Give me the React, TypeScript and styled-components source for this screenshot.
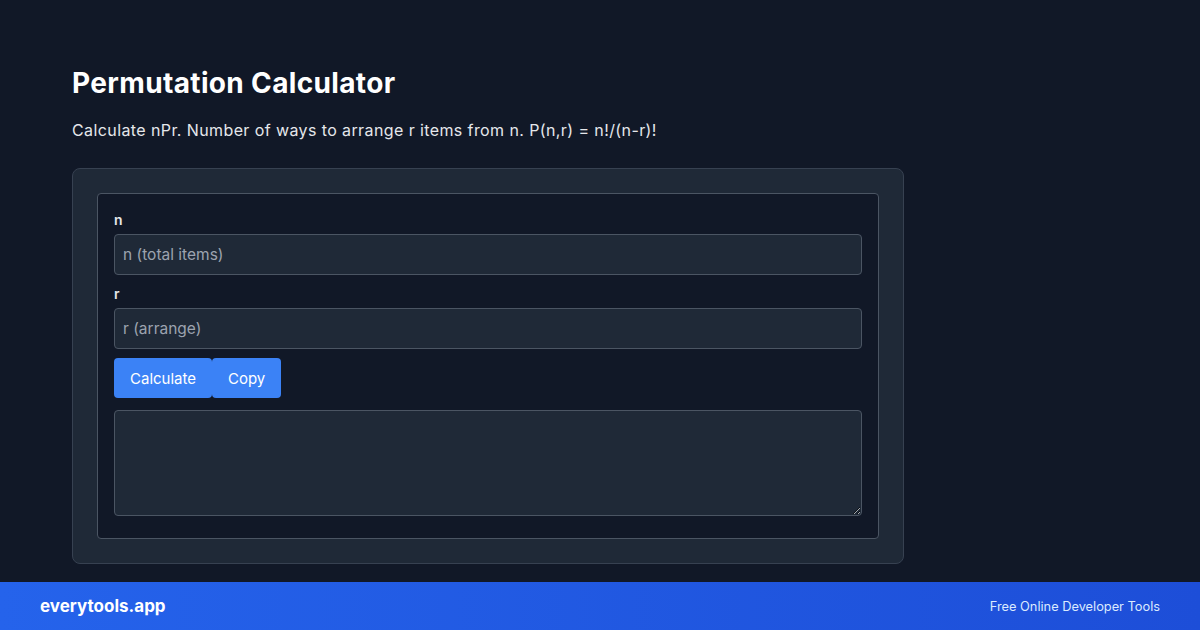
import React, { useState } from "react";
import styled, { createGlobalStyle } from "styled-components";

const GlobalStyle = createGlobalStyle`
  * { box-sizing: border-box; }
  body {
    margin: 0;
    background: #111827;
    font-family: Inter, "Noto Sans", sans-serif;
    color: #f9fafb;
  }
`;

const Page = styled.div`
  display: flex;
  flex-direction: column;
  height: 630px;
  width: 1200px;
  overflow: hidden;
`;

const Main = styled.main`
  padding: 64px 72px 0;
  flex: 1;
`;

const Title = styled.h1`
  margin: 0;
  font-size: 28px;
  line-height: 38px;
  font-weight: 700;
  letter-spacing: 0.35px;
  color: #ffffff;
`;

const Lead = styled.p`
  margin: 16px 0 0;
  font-size: 16px;
  line-height: 24px;
  letter-spacing: 0.4px;
  color: #e5e7eb;
`;

const Card = styled.section`
  margin-top: 26px;
  width: 832px;
  padding: 24px;
  background: #1f2937;
  border: 1px solid #374151;
  border-radius: 8px;
`;

const Tool = styled.div`
  padding: 16px;
  background: #111827;
  border: 1px solid #4b5563;
  border-radius: 4px;
`;

const Label = styled.label`
  display: block;
  font-size: 14px;
  line-height: 20px;
  font-weight: 600;
  color: #e5e7eb;
  margin-bottom: 4px;
`;

const Field = styled.input`
  display: block;
  width: 100%;
  height: 41px;
  padding: 0 8px;
  margin-bottom: 9px;
  font: inherit;
  font-size: 15.5px;
  color: #f9fafb;
  background: #1f2937;
  border: 1px solid #4b5563;
  border-radius: 4px;
  outline: none;
  &::placeholder { color: #9ca3af; }
`;

const Actions = styled.div`
  display: flex;
  margin: 9px 0 12px;
`;

const Button = styled.button`
  height: 40px;
  padding: 0 16px;
  font: inherit;
  font-size: 15px;
  color: #ffffff;
  background: #3b82f6;
  border: none;
  border-radius: 4px;
  cursor: pointer;
`;

const Output = styled.textarea`
  display: block;
  width: 100%;
  height: 106px;
  padding: 8px;
  margin-bottom: 6px;
  font: inherit;
  font-size: 16px;
  color: #f9fafb;
  background: #1f2937;
  border: 1px solid #4b5563;
  border-radius: 4px;
  outline: none;
  resize: vertical;
`;

const Footer = styled.footer`
  display: flex;
  align-items: center;
  justify-content: space-between;
  height: 48px;
  padding: 0 40px;
  background: linear-gradient(90deg, #2563eb, #1d4ed8);
`;

const Brand = styled.span`
  font-size: 17px;
  font-weight: 700;
  color: #ffffff;
`;

const Tagline = styled.span`
  font-size: 12.8px;
  color: #dbeafe;
`;

const factorial = (k: number): number => (k <= 1 ? 1 : k * factorial(k - 1));

export default function App() {
  const [n, setN] = useState("");
  const [r, setR] = useState("");
  const [out, setOut] = useState("");

  const calc = () => {
    const a = parseInt(n, 10);
    const b = parseInt(r, 10);
    if (isNaN(a) || isNaN(b) || b > a || a < 0 || b < 0) {
      setOut("Invalid input");
      return;
    }
    setOut(String(factorial(a) / factorial(a - b)));
  };

  return (
    <Page>
      <GlobalStyle />
      <Main>
        <Title>Permutation Calculator</Title>
        <Lead>Calculate nPr. Number of ways to arrange r items from n. P(n,r) = n!/(n-r)!</Lead>
        <Card>
          <Tool>
            <Label>n</Label>
            <Field placeholder="n (total items)" value={n} onChange={(e) => setN(e.target.value)} />
            <Label>r</Label>
            <Field placeholder="r (arrange)" value={r} onChange={(e) => setR(e.target.value)} />
            <Actions>
              <Button onClick={calc}>Calculate</Button>
              <Button onClick={() => navigator.clipboard?.writeText(out)}>Copy</Button>
            </Actions>
            <Output readOnly value={out} />
          </Tool>
        </Card>
      </Main>
      <Footer>
        <Brand>everytools.app</Brand>
        <Tagline>Free Online Developer Tools</Tagline>
      </Footer>
    </Page>
  );
}
